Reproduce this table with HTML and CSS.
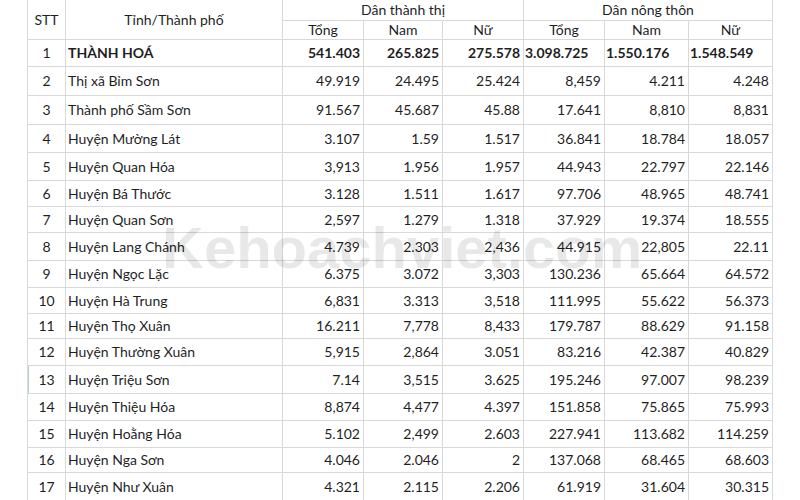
FILE: index.html
```html
<!DOCTYPE html>
<html lang="vi">
<head>
<meta charset="utf-8">
<title>Dân số Thanh Hoá</title>
<link rel="stylesheet" href="styles.css">
</head>
<body>
<div class="sheet">
  <div class="grid">
    <div class="c hd tall">STT</div>
    <div class="c hd tall">Tỉnh/Thành phố</div>
    <div class="c hd group">Dân thành thị</div>
    <div class="c hd group">Dân nông thôn</div>
    <div class="c hd">Tổng</div><div class="c hd">Nam</div><div class="c hd">Nữ</div>
    <div class="c hd">Tổng</div><div class="c hd">Nam</div><div class="c hd">Nữ</div>

    <div class="c n">1</div><div class="c t b">THÀNH HOÁ</div><div class="c r b">541.403</div><div class="c r b">265.825</div><div class="c r b">275.578</div><div class="c l b">3.098.725</div><div class="c l b">1.550.176</div><div class="c l b">1.548.549</div>
    <div class="c n">2</div><div class="c t">Thị xã Bỉm Sơn</div><div class="c r">49.919</div><div class="c r">24.495</div><div class="c r">25.424</div><div class="c r">8,459</div><div class="c r">4.211</div><div class="c r">4.248</div>
    <div class="c n">3</div><div class="c t">Thành phố Sầm Sơn</div><div class="c r">91.567</div><div class="c r">45.687</div><div class="c r">45.88</div><div class="c r">17.641</div><div class="c r">8,810</div><div class="c r">8,831</div>
    <div class="c n">4</div><div class="c t">Huyện Mường Lát</div><div class="c r">3.107</div><div class="c r">1.59</div><div class="c r">1.517</div><div class="c r">36.841</div><div class="c r">18.784</div><div class="c r">18.057</div>
    <div class="c n">5</div><div class="c t">Huyện Quan Hóa</div><div class="c r">3,913</div><div class="c r">1.956</div><div class="c r">1.957</div><div class="c r">44.943</div><div class="c r">22.797</div><div class="c r">22.146</div>
    <div class="c n">6</div><div class="c t">Huyện Bá Thước</div><div class="c r">3.128</div><div class="c r">1.511</div><div class="c r">1.617</div><div class="c r">97.706</div><div class="c r">48.965</div><div class="c r">48.741</div>
    <div class="c n">7</div><div class="c t">Huyện Quan Sơn</div><div class="c r">2,597</div><div class="c r">1.279</div><div class="c r">1.318</div><div class="c r">37.929</div><div class="c r">19.374</div><div class="c r">18.555</div>
    <div class="c n">8</div><div class="c t">Huyện Lang Chánh</div><div class="c r">4.739</div><div class="c r">2.303</div><div class="c r">2,436</div><div class="c r">44.915</div><div class="c r">22,805</div><div class="c r">22.11</div>
    <div class="c n">9</div><div class="c t">Huyện Ngọc Lặc</div><div class="c r">6.375</div><div class="c r">3.072</div><div class="c r">3,303</div><div class="c r">130.236</div><div class="c r">65.664</div><div class="c r">64.572</div>
    <div class="c n">10</div><div class="c t">Huyện Hà Trung</div><div class="c r">6,831</div><div class="c r">3.313</div><div class="c r">3,518</div><div class="c r">111.995</div><div class="c r">55.622</div><div class="c r">56.373</div>
    <div class="c n">11</div><div class="c t">Huyện Thọ Xuân</div><div class="c r">16.211</div><div class="c r">7,778</div><div class="c r">8,433</div><div class="c r">179.787</div><div class="c r">88.629</div><div class="c r">91.158</div>
    <div class="c n">12</div><div class="c t">Huyện Thường Xuân</div><div class="c r">5,915</div><div class="c r">2,864</div><div class="c r">3.051</div><div class="c r">83.216</div><div class="c r">42.387</div><div class="c r">40.829</div>
    <div class="c n sel">13</div><div class="c t">Huyện Triệu Sơn</div><div class="c r">7.14</div><div class="c r">3,515</div><div class="c r">3.625</div><div class="c r">195.246</div><div class="c r">97.007</div><div class="c r">98.239</div>
    <div class="c n">14</div><div class="c t">Huyện Thiệu Hóa</div><div class="c r">8,874</div><div class="c r">4,477</div><div class="c r">4.397</div><div class="c r">151.858</div><div class="c r">75.865</div><div class="c r">75.993</div>
    <div class="c n">15</div><div class="c t">Huyện Hoằng Hóa</div><div class="c r">5.102</div><div class="c r">2,499</div><div class="c r">2.603</div><div class="c r">227.941</div><div class="c r">113.682</div><div class="c r">114.259</div>
    <div class="c n">16</div><div class="c t">Huyện Nga Sơn</div><div class="c r">4.046</div><div class="c r">2.046</div><div class="c r">2</div><div class="c r">137.068</div><div class="c r">68.465</div><div class="c r">68.603</div>
    <div class="c n">17</div><div class="c t">Huyện Như Xuân</div><div class="c r">4.321</div><div class="c r">2.115</div><div class="c r">2.206</div><div class="c r">61.919</div><div class="c r">31.604</div><div class="c r">30.315</div>
  </div>
  <div class="watermark">Kehoachviet.com</div>
</div>
</body>
</html>
```

FILE: styles.css
```css
html, body {
  margin: 0;
  padding: 0;
  background: #ffffff;
}
body {
  width: 800px;
  height: 500px;
  overflow: hidden;
  font-family: "Lato", "Open Sans", sans-serif;
  font-size: 14px;
  color: #1f1f1f;
}
.sheet {
  position: relative;
  padding-left: 27px;
}
.grid {
  display: grid;
  width: max-content;
  grid-template-columns: 37px 216px 80px 78px 80px 80px 83px 83px;
  grid-template-rows: 20px 18px 26px 28px 28px 27px 27px 25px 25px 27px 26px 25px 24px 26px 27px 26px 26px 24px 27px;
  gap: 1px;
  padding: 0 1px;
  background: #d9d9d9;
}
.c {
  background: #ffffff;
  display: flex;
  align-items: center;
  white-space: nowrap;
  overflow: hidden;
  line-height: 1;
}
.hd { justify-content: center; }
.tall { grid-row: span 2; }
.group { grid-column: span 3; }
.n { justify-content: center; }
.t { justify-content: flex-start; padding-left: 2px; }
.r { justify-content: flex-end; padding-right: 3px; }
.l { justify-content: flex-start; padding-left: 1px; }
.b { font-weight: 700; }
.sel { box-shadow: inset 1px 0 0 #b7d4c2; }
.watermark {
  position: absolute;
  left: 162px;
  top: 219px;
  font-family: "Liberation Sans", Arial, sans-serif;
  font-weight: 700;
  font-size: 58px;
  line-height: 1;
  color: rgba(0, 0, 0, 0.09);
  pointer-events: none;
  white-space: nowrap;
}
```
